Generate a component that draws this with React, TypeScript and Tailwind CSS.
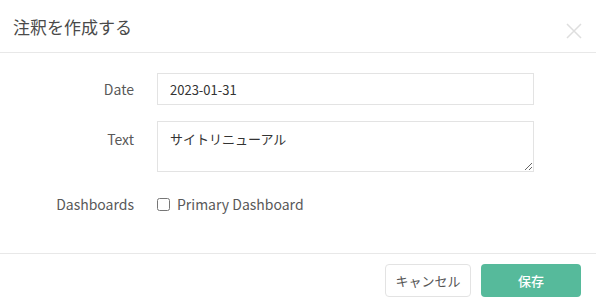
import { useEffect, useRef } from "react"

const font = { fontFamily: '"Noto Sans CJK JP", "Noto Sans", sans-serif' }

export default function App() {
  const textRef = useRef<HTMLTextAreaElement>(null)

  useEffect(() => {
    const el = textRef.current
    if (el) {
      el.focus()
      el.setSelectionRange(el.value.length, el.value.length)
    }
  }, [])

  return (
    <div className="w-[596px] h-[306px] bg-white text-[#595959] flex flex-col" style={font}>
      {/* header */}
      <div className="h-[53px] border-b border-[#e8e8e8] flex items-center justify-between pl-[13px] pr-[14px]">
        <h2 className="text-[17px] text-[#4a4a4a] leading-none">注釈を作成する</h2>
        <svg viewBox="0 0 16 16" className="w-[16px] h-[16px] mt-[9px]" fill="none" stroke="#dedede" strokeWidth="1.5">
          <path d="M1 1 15 15M15 1 1 15" />
        </svg>
      </div>

      {/* body */}
      <div className="flex-1 pt-[20px] flex flex-col gap-[16px] text-[14px]">
        <div className="flex items-center">
          <label className="w-[134px] text-right text-[#595959]">Date</label>
          <input
            className="ml-[23px] w-[377px] h-[32px] border border-[#e3e3e3] px-[12px] text-[13px] text-[#333] outline-none"
            defaultValue="2023-01-31"
            style={font}
          />
        </div>
        <div className="flex items-start">
          <label className="w-[134px] text-right text-[#595959] pt-[8px]">Text</label>
          <textarea
            ref={textRef}
            className="ml-[23px] w-[377px] h-[51px] border border-[#e3e3e3] px-[12px] pt-[7px] text-[13px] text-[#333] outline-none caret-[#333]"
            defaultValue="サイトリニューアル"
            style={font}
          />
        </div>
        <div className="flex items-center mt-[6px]">
          <label className="w-[134px] text-right text-[#595959]">Dashboards</label>
          <label className="ml-[23px] flex items-center gap-[7px] text-[#595959]">
            <input type="checkbox" className="w-[13px] h-[13px] m-0" />
            <span>Primary Dashboard</span>
          </label>
        </div>
      </div>

      {/* footer */}
      <div className="h-[53px] border-t border-[#e8e8e8] flex items-start justify-end gap-[10px] pr-[15px] pt-[10px]">
        <button className="w-[86px] h-[33px] rounded-[4px] border border-[#e3e3e3] bg-white text-[13px] text-[#555]" style={font}>
          キャンセル
        </button>
        <button className="w-[100px] h-[33px] rounded-[4px] bg-[#56ba9b] text-white text-[13px] font-medium" style={font}>
          保存
        </button>
      </div>
    </div>
  )
}
